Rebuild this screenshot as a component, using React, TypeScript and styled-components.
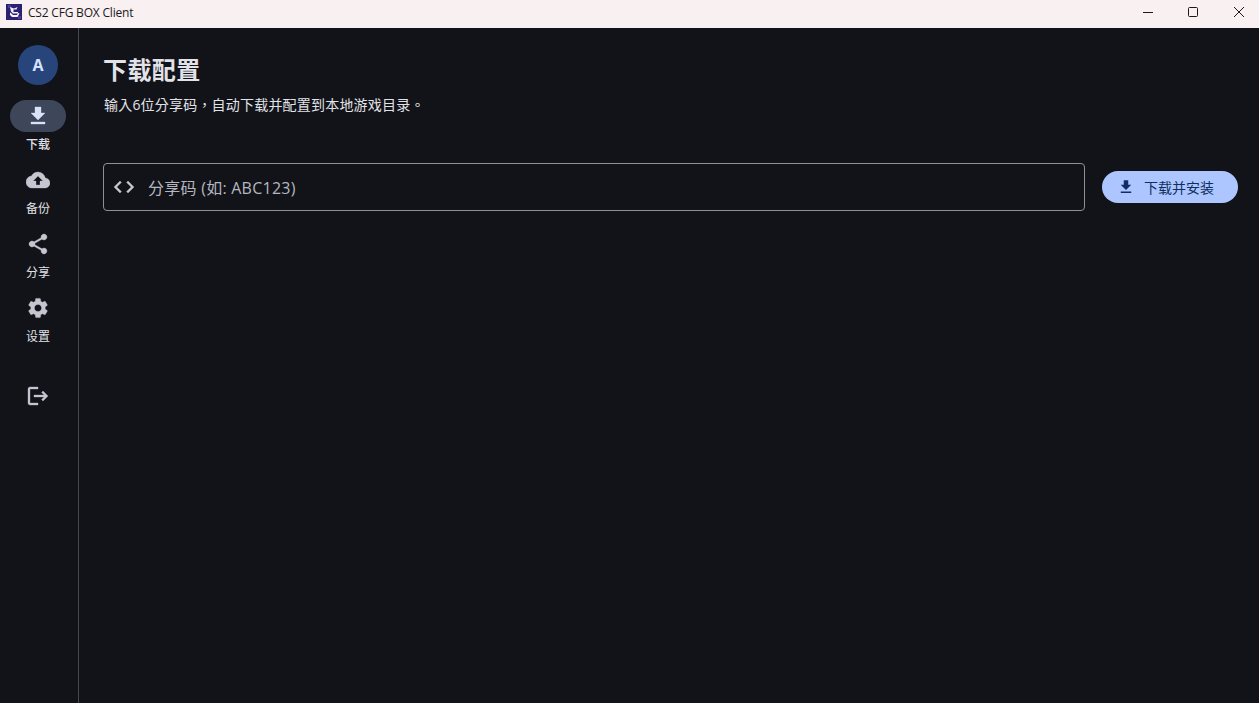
import { createGlobalStyle, styled } from "styled-components";
import { MdCloudUpload, MdCode, MdDownload, MdLogout, MdSettings, MdShare } from "react-icons/md";

const GlobalStyle = createGlobalStyle`
  html, body {
    margin: 0;
    height: 100%;
    background: #111318;
    overflow: hidden;
  }
  * { box-sizing: border-box; }
  #root { height: 100%; }
`;

const FONT = `"Open Sans", "Noto Sans CJK SC", sans-serif`;

const Shell = styled.div`
  display: flex;
  flex-direction: column;
  height: 703px;
  font-family: ${FONT};
  color: #e2e2e9;
  overflow: hidden;
`;

// 윈도우 타이틀바
const TitleBar = styled.header`
  display: flex;
  align-items: center;
  height: 28px;
  flex: none;
  padding: 0 0 4px 6px;
  background: #f9f0f2;
  color: #1a1a1a;
  font-size: 12px;
  letter-spacing: -0.2px;
`;

const AppName = styled.span`
  margin-left: 6px;
  flex: 1;
`;

const WinButton = styled.div`
  display: flex;
  align-items: center;
  justify-content: center;
  width: 45.5px;
  height: 24px;
  color: #1a1a1a;
  &:last-child {
    margin-right: -2.5px;
  }
`;

const Body = styled.div`
  display: flex;
  flex: 1;
  min-height: 0;
`;

const Rail = styled.nav`
  display: flex;
  flex-direction: column;
  align-items: center;
  width: 79px;
  flex: none;
  padding: 17px 2px 0 0;
  border-right: 1px solid #44474e;
  svg path:not([fill="none"]) {
    stroke: currentColor;
    stroke-width: 0.35;
  }
`;

const Avatar = styled.div`
  display: flex;
  align-items: center;
  justify-content: center;
  width: 40px;
  height: 40px;
  margin-bottom: 15px;
  border-radius: 50%;
  background: #27457a;
  color: #d8e2ff;
  font-size: 16px;
  font-weight: 700;
`;

const RailItem = styled.div`
  display: flex;
  flex-direction: column;
  align-items: center;
  height: 64px;
`;

const RailPill = styled.div<{ $active?: boolean }>`
  display: flex;
  align-items: center;
  justify-content: center;
  width: 56px;
  height: 32px;
  border-radius: 16px;
  background: ${(p) => (p.$active ? "#3e4759" : "transparent")};
  color: ${(p) => (p.$active ? "#dae2f9" : "#c4c6d0")};
`;

const RailLabel = styled.span<{ $active?: boolean }>`
  margin-top: 3px;
  font-size: 12px;
  line-height: 20px;
  font-weight: ${(p) => (p.$active ? 500 : 400)};
  color: #e2e2e9;
`;

const RailExit = styled.div`
  display: flex;
  align-items: center;
  justify-content: center;
  margin-top: 20px;
  width: 40px;
  height: 40px;
  color: #c4c6d0;
`;

const Main = styled.main`
  flex: 1;
  padding: 25px 21px 0 24px;
`;

const Heading = styled.h1`
  margin: 0;
  font-size: 24px;
  line-height: 34px;
  font-weight: 700;
  letter-spacing: 0.4px;
  color: #e2e2e9;
`;

const SubText = styled.p`
  margin: 7px 0 0;
  padding-left: 1px;
  font-family: "Open Sans", "Noto Sans CJK TC", sans-serif;
  font-size: 14px;
  line-height: 22px;
  letter-spacing: 0.2px;
  color: #e2e2e9;
`;

const FormRow = styled.div`
  display: flex;
  align-items: center;
  gap: 17px;
  margin-top: 47px;
`;

const CodeField = styled.div`
  display: flex;
  align-items: center;
  flex: 1;
  height: 48px;
  padding-left: 8px;
  border: 1px solid #8e9099;
  border-radius: 4px;
  color: #c4c6d0;
  svg path:not([fill="none"]) {
    stroke: currentColor;
    stroke-width: 0.4;
  }
`;

const Placeholder = styled.span`
  margin-left: 12px;
  font-size: 16px;
  letter-spacing: 0.25px;
  color: #b5b7c0;
`;

const InstallButton = styled.button`
  display: flex;
  align-items: center;
  gap: 9px;
  width: 136px;
  height: 32px;
  padding: 0 0 0 15px;
  border: none;
  border-radius: 16px;
  background: #adc6ff;
  color: #102f60;
  font-family: ${FONT};
  font-size: 14px;
  font-weight: 400;
`;

const LogoIcon = () => (
  <svg width="16" height="16" viewBox="0 0 16 16">
    <rect width="16" height="16" fill="#2b2170" />
    <path d="M2 1h3v3H2zM12 12h3v3h-3z" fill="#4a3c9a" />
    <path d="M4 3l4 1.5 3.5-1.5-1 2.5H7.5V8H12v1.5H7L5 7.5z" fill="#f1edfb" />
    <path d="M4 8.5v2.5l2 2h5.5l2-3.5-1.5-.5-1 2H7L5.5 9.5z" fill="#f7f4fd" />
  </svg>
);

const navItems = [
  { label: "下载", icon: MdDownload, active: true },
  { label: "备份", icon: MdCloudUpload },
  { label: "分享", icon: MdShare },
  { label: "设置", icon: MdSettings },
];

export default function App() {
  return (
    <>
      <GlobalStyle />
      <Shell>
        <TitleBar>
          <LogoIcon />
          <AppName>CS2 CFG BOX Client</AppName>
          <WinButton>
            <svg width="10" height="10" viewBox="0 0 10 10">
              <path d="M0 5.5h10" stroke="currentColor" strokeWidth="1" />
            </svg>
          </WinButton>
          <WinButton>
            <svg width="10" height="10" viewBox="0 0 10 10">
              <rect x="0.5" y="0.5" width="9" height="9" rx="1" fill="none" stroke="currentColor" />
            </svg>
          </WinButton>
          <WinButton>
            <svg width="10" height="10" viewBox="0 0 10 10">
              <path d="M0 0l10 10M10 0L0 10" stroke="currentColor" strokeWidth="1" />
            </svg>
          </WinButton>
        </TitleBar>
        <Body>
          <Rail>
            <Avatar>A</Avatar>
            {navItems.map((item) => (
              <RailItem key={item.label}>
                <RailPill $active={item.active}>
                  <item.icon size={24} />
                </RailPill>
                <RailLabel $active={item.active}>{item.label}</RailLabel>
              </RailItem>
            ))}
            <RailExit>
              <MdLogout size={24} />
            </RailExit>
          </Rail>
          <Main>
            <Heading>下载配置</Heading>
            <SubText>输入6位分享码，自动下载并配置到本地游戏目录。</SubText>
            <FormRow>
              <CodeField>
                <MdCode size={24} />
                <Placeholder>分享码 (如: ABC123)</Placeholder>
              </CodeField>
              <InstallButton>
                <MdDownload size={18} />
                下载并安装
              </InstallButton>
            </FormRow>
          </Main>
        </Body>
      </Shell>
    </>
  );
}
